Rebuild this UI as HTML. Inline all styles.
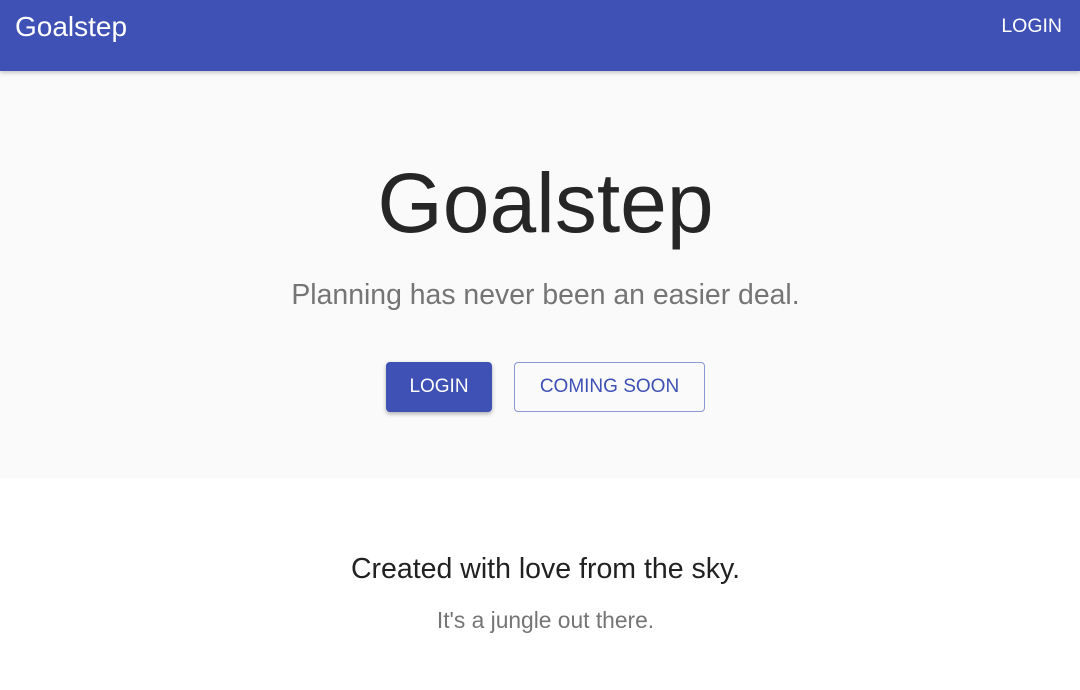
<!DOCTYPE html>
<html><head><style>
*{margin:0;padding:0;box-sizing:border-box}
body{width:1080px;height:690px;overflow:hidden;font-family:"Liberation Sans",Helvetica,Arial,sans-serif;background:#fff}
.bar{height:71px;background:#3f51b5;color:#fff;position:relative;box-shadow:0 2px 4px rgba(0,0,0,.2)}
.bar .t{position:absolute;left:15px;top:11px;font-size:28px}
.bar .l{position:absolute;right:18px;top:15px;font-size:19.5px}
.hero{height:407px;background:#fafafa;text-align:center;padding-left:11px}
h1{font-weight:300;font-size:84px;color:#262626;padding-top:87px;line-height:90px}
.sub{font-size:28.4px;color:#757575;margin-top:31px}
.btns{margin-top:50px;display:flex;justify-content:center;gap:22px}
.b1{width:106px;height:50px;background:#3f51b5;color:#fff;border-radius:4px;font-size:19px;line-height:50px;box-shadow:0 2px 4px rgba(0,0,0,.3)}
.b2{width:191px;height:50px;border:1px solid #8c97d6;color:#3f51b5;border-radius:4px;font-size:19px;line-height:48px}
.f{text-align:center;padding-left:11px}
.f1{font-size:28.5px;color:#212121;margin-top:75px}
.f2{font-size:22.8px;color:#757575;margin-top:21px}
</style></head><body>
<div class="bar"><div class="t">Goalstep</div><div class="l">LOGIN</div></div>
<div class="hero"><h1>Goalstep</h1><div class="sub">Planning has never been an easier deal.</div>
<div class="btns"><div class="b1">LOGIN</div><div class="b2">COMING SOON</div></div></div>
<div class="f"><div class="f1">Created with love from the sky.</div><div class="f2">It's a jungle out there.</div></div>
</body></html>
